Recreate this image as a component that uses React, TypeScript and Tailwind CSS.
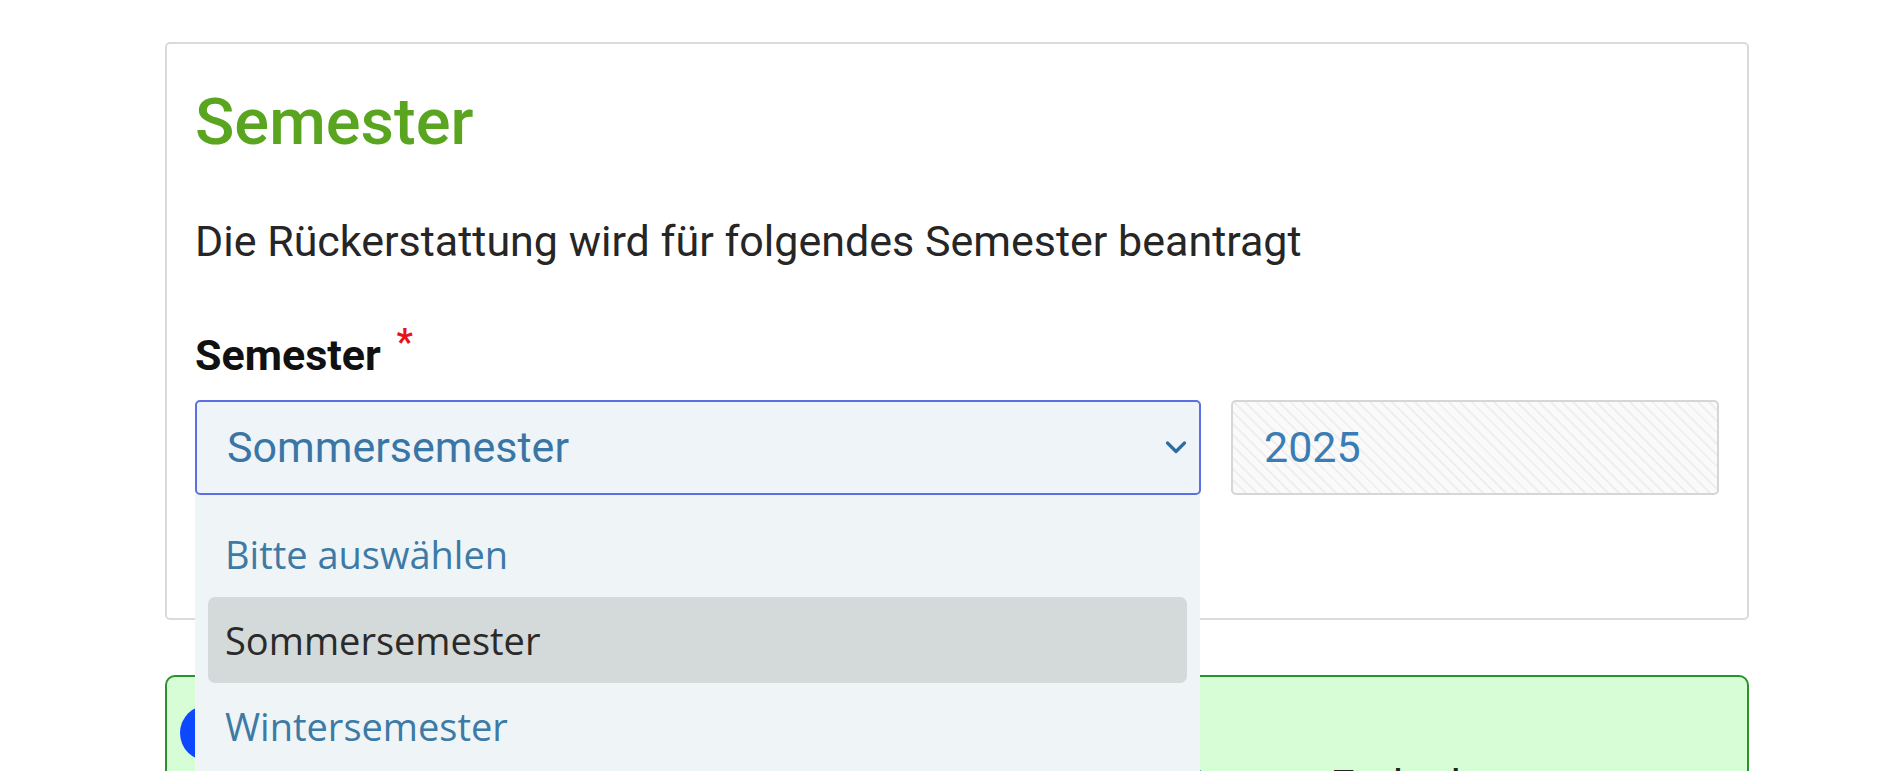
export default function App() {
  return (
    <div className="h-[771px] overflow-hidden bg-white font-['Roboto',sans-serif] pl-[165px] pt-[42px]">
      <div className="w-[1584px]">
        <section className="rounded-[5px] border-2 border-[#dadada] px-[28px] pt-[40px] pb-[123px]">
          <h2 className="text-[65px] font-medium leading-[77px] text-[#5aa51f]">Semester</h2>
          <p className="mt-[48px] text-[43px] leading-[64px] text-[#262626]">
            Die Rückerstattung wird für folgendes Semester beantragt
          </p>
          <div className="mt-[50px] text-[43px] font-bold leading-[64px] text-[#111111]">
            Semester <span className="relative left-[5px] top-[-16px] text-[36px] text-[#e8141c]">*</span>
          </div>
          <div className="mt-[10px] flex gap-[30px]">
            <div className="relative w-[1006px]">
              <div className="flex h-[95px] items-center justify-between rounded-[5px] border-2 border-[#5b6fe6] bg-[#eef4f8] pl-[30px] pr-[12px] text-[43px] text-[#3a76a5]">
                <span>Sommersemester</span>
                <svg width="22" height="15" viewBox="0 0 22 15" fill="none">
                  <path d="M2.5 3 L11 11.5 L19.5 3" stroke="#2f6d9c" strokeWidth="3.2" strokeLinecap="round" strokeLinejoin="round" />
                </svg>
              </div>
              <div className="absolute left-0 top-full z-10 h-[400px] w-[1005px] bg-[#eff4f7] pt-[16px] font-['Open_Sans',sans-serif] text-[38px]">
                <div className="flex h-[86px] items-center pl-[30px] text-[#3d7aa6]">Bitte auswählen</div>
                <div className="mx-[13px] flex h-[86px] items-center rounded-[7px] bg-[#d4d9da] pl-[17px] text-[#2a2a2a]">Sommersemester</div>
                <div className="flex h-[86px] items-center pl-[30px] text-[#3d7aa6]">Wintersemester</div>
              </div>
            </div>
            <div className="flex h-[95px] flex-1 items-center rounded-[5px] border-2 border-[#d6d6d6] bg-[repeating-linear-gradient(45deg,#efefef_0px,#efefef_2px,#fafafa_2px,#fafafa_8px)] pl-[31px] text-[43px] text-[#3a7db5]">
              2025
            </div>
          </div>
        </section>
        <div className="mt-[55px] flex h-[300px] gap-[24px] rounded-[10px] border-2 border-[#2a922a] bg-[#d6fdd6] pl-[13px] pt-[28px]">
          <div className="flex h-[56px] w-[56px] shrink-0 items-center justify-center rounded-full bg-[#0d47ff] text-[34px] font-bold text-white">i</div>
          <div className="w-[1400px] text-[43px] leading-[64px] text-[#222222]">
            <div className="font-bold leading-[48px]">Hinweis</div>
            <p>
              Bitte beachten Sie, dass die Rückerstattung nur bis zum Ende des jeweiligen Semesters beantragt werden kann und alle Nachweise beigefügt sein müssen.
            </p>
          </div>
        </div>
      </div>
    </div>
  );
}
